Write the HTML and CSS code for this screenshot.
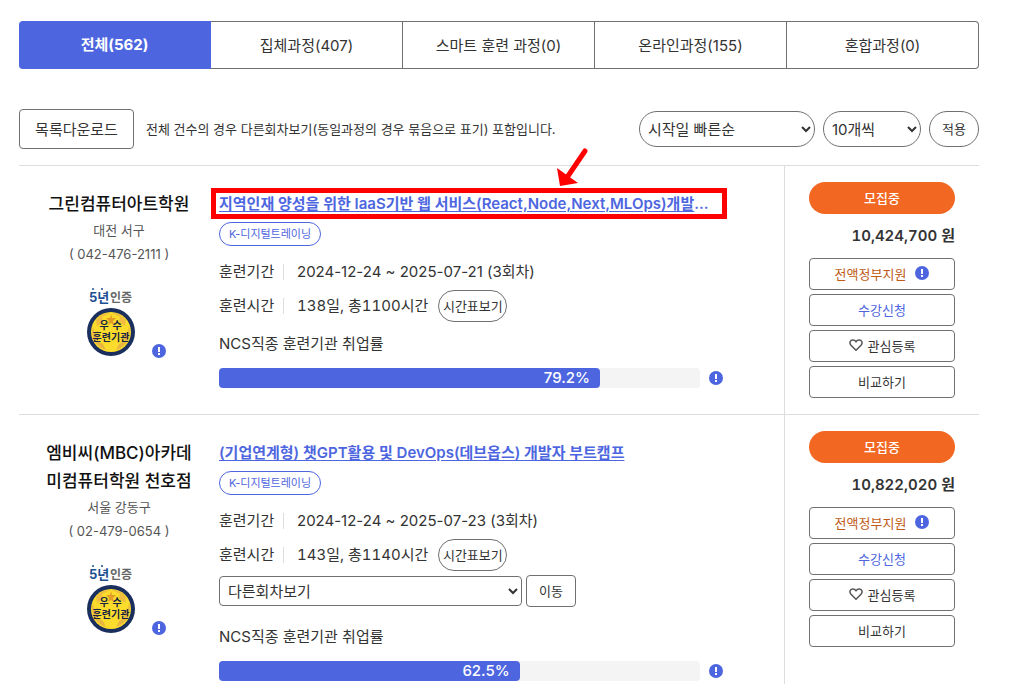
FILE: index.html
```html
<!DOCTYPE html>
<html lang="ko">
	<head>
		<meta charset="UTF-8" />
		<meta name="viewport" content="width=device-width, initial-scale=1.0" />
		<title>훈련과정 검색</title>
		<link rel="stylesheet" href="styles.css">
	</head>
	<body>
		<!-- shared icons -->
		<svg class="sprite" aria-hidden="true">
			<symbol id="icon-info" viewBox="0 0 14 14">
				<circle cx="7" cy="7" r="7" fill="#4d66e0" />
				<path d="M6 3h2v5H6zM6 9h2v2H6z" fill="#fff" />
			</symbol>
			<symbol id="icon-heart" viewBox="0 0 14 12">
				<path d="M7 11.200 2 6.200C-.2 3.800 1.300 1 3.800 1 5.300 1 6.500 1.800 7 2.800 7.500 1.800 8.700 1 10.200 1c2.500 0 4 2.800 1.800 5.200z" fill="none" stroke="#555" stroke-width="1.500" stroke-linejoin="round" />
			</symbol>
			<symbol id="seal" viewBox="0 0 48 68">
				<circle cx="6" cy="1" r="1" fill="#1c4f93" />
				<circle cx="15" cy="1" r="1" fill="#1c4f93" />
				<text x="2" y="14" font-size="13" font-weight="700" fill="#1c4f93">5년</text>
				<text x="23" y="14" font-size="12" font-weight="700" fill="#666">인증</text>
				<circle cx="24" cy="44" r="24" fill="#1b2f5e" />
				<circle cx="24" cy="44" r="20" fill="#fbdc2c" />
				<path d="M6 38a19 19 0 0 0 13 24l-3-6-5-3 1-6-5-3zM42 38a19 19 0 0 1-13 24l3-6 5-3-1-6 5-3z" fill="#e9b640" />
				<path d="M9 32q6-8 14-7l-8 4 1 5-6 4zM39 32q-6-8-14-7l8 4-1 5 6 4z" fill="#efbd3f" />
				<path d="m24 26 1 4h4l-3 3 1 4-3-2-3 2 1-4-3-3h4z" fill="#e59b28" />
				<text x="17" y="41" font-size="10" font-weight="700" text-anchor="middle" fill="#16243f">우</text>
				<text x="30" y="41" font-size="10" font-weight="700" text-anchor="middle" fill="#16243f">수</text>
				<text x="24" y="53" font-size="10" font-weight="700" text-anchor="middle" fill="#16243f">훈련기관</text>
			</symbol>
		</svg>

		<main>
			<nav class="tabs">
				<a href="#" class="active">전체(562)</a>
				<a href="#">집체과정(407)</a>
				<a href="#">스마트 훈련 과정(0)</a>
				<a href="#">온라인과정(155)</a>
				<a href="#">혼합과정(0)</a>
			</nav>

			<form class="toolbar">
				<button type="button" class="btn btn-download">목록다운로드</button>
				<p>전체 건수의 경우 다른회차보기(동일과정의 경우 묶음으로 표기) 포함입니다.</p>
				<select class="sort" aria-label="정렬">
					<option>시작일 빠른순</option>
				</select>
				<select class="count" aria-label="목록 개수">
					<option>10개씩</option>
				</select>
				<button type="button" class="btn btn-apply">적용</button>
			</form>

			<article class="course">
				<div class="school">
					<h3>그린컴퓨터아트학원</h3>
					<p>대전 서구</p>
					<p>( 042-476-2111 )</p>
					<div class="cert">
						<svg class="seal"><use href="#seal" /></svg>
						<svg class="info"><use href="#icon-info" /></svg>
					</div>
				</div>
				<div class="detail">
					<div class="title marked">
						<a href="#">지역인재 양성을 위한 IaaS기반 웹 서비스(React,Node,Next,MLOps)개발</a><span>...</span>
						<svg class="arrow" viewBox="0 0 34 40">
							<path d="M29 3 12 28" stroke="#f00" stroke-width="5" stroke-linecap="round" />
							<path d="M1 20 4 38l18-3z" fill="#f00" />
						</svg>
					</div>
					<span class="badge">K-디지털트레이닝</span>
					<dl>
						<dt>훈련기간</dt>
						<dd>2024-12-24 ~ 2025-07-21 (3회차)</dd>
						<dt>훈련시간</dt>
						<dd class="hours">138일, 총1100시간 <button type="button" class="btn btn-time">시간표보기</button></dd>
					</dl>
					<p class="rate-label">NCS직종 훈련기관 취업률</p>
					<div class="rate">
						<div class="bar"><div class="fill" style="width: 79.2%">79.2%</div></div>
						<svg class="info"><use href="#icon-info" /></svg>
					</div>
				</div>
				<div class="actions">
					<span class="status">모집중</span>
					<strong class="price">10,424,700 원</strong>
					<button type="button" class="btn support">전액정부지원 <svg class="info"><use href="#icon-info" /></svg></button>
					<button type="button" class="btn apply">수강신청</button>
					<button type="button" class="btn"><svg class="heart"><use href="#icon-heart" /></svg>관심등록</button>
					<button type="button" class="btn">비교하기</button>
				</div>
			</article>

			<article class="course">
				<div class="school">
					<h3>엠비씨(MBC)아카데미컴퓨터학원 천호점</h3>
					<p>서울 강동구</p>
					<p>( 02-479-0654 )</p>
					<div class="cert">
						<svg class="seal"><use href="#seal" /></svg>
						<svg class="info"><use href="#icon-info" /></svg>
					</div>
				</div>
				<div class="detail">
					<div class="title">
						<a href="#">(기업연계형) 챗GPT활용 및 DevOps(데브옵스) 개발자 부트캠프</a>
					</div>
					<span class="badge">K-디지털트레이닝</span>
					<dl>
						<dt>훈련기간</dt>
						<dd>2024-12-24 ~ 2025-07-23 (3회차)</dd>
						<dt>훈련시간</dt>
						<dd class="hours">143일, 총1140시간 <button type="button" class="btn btn-time">시간표보기</button></dd>
					</dl>
					<div class="rounds">
						<select aria-label="다른회차보기">
							<option>다른회차보기</option>
						</select>
						<button type="button" class="btn">이동</button>
					</div>
					<p class="rate-label">NCS직종 훈련기관 취업률</p>
					<div class="rate">
						<div class="bar"><div class="fill" style="width: 62.5%">62.5%</div></div>
						<svg class="info"><use href="#icon-info" /></svg>
					</div>
				</div>
				<div class="actions">
					<span class="status">모집중</span>
					<strong class="price">10,822,020 원</strong>
					<button type="button" class="btn support">전액정부지원 <svg class="info"><use href="#icon-info" /></svg></button>
					<button type="button" class="btn apply">수강신청</button>
					<button type="button" class="btn"><svg class="heart"><use href="#icon-heart" /></svg>관심등록</button>
					<button type="button" class="btn">비교하기</button>
				</div>
			</article>
		</main>
	</body>
</html>
```
FILE: styles.css
```css
* {
	box-sizing: border-box;
}

body {
	margin: 0;
	background-color: #fff;
	color: #333;
	font-family: Inter, 'Noto Sans CJK KR', sans-serif;
	font-size: 15px;
	line-height: 24px;
}

main {
	padding: 21px 36px 0 19px;
}

h3,
p,
dl,
dd {
	margin: 0;
}

button,
select {
	font-family: inherit;
	color: #333;
	background-color: #fff;
	border: 1px solid #707070;
	border-radius: 4px;
}

select {
	font-size: 15px;
	padding: 0 0 0 4px;
}

.sprite {
	display: none;
}

.info {
	width: 14px;
	height: 14px;
	flex-shrink: 0;
}

.btn {
	display: flex;
	justify-content: center;
	align-items: center;
	height: 32px;
	padding: 0 0 2px;
	font-size: 13px;
	cursor: pointer;
}

/* tabs */
.tabs {
	display: grid;
	grid-template-columns: repeat(5, 1fr);
	height: 48px;
}

.tabs a {
	display: flex;
	justify-content: center;
	align-items: center;
	padding-top: 2px;
	border: 1px solid #707070;
	border-left: none;
	color: #333;
	text-decoration: none;
}

.tabs a:last-child {
	border-radius: 0 4px 4px 0;
}

.tabs .active {
	padding-top: 0;
	background-color: #4d66e0;
	border-color: #4d66e0;
	color: #fff;
	font-weight: 700;
	border-radius: 4px 0 0 4px;
}

/* toolbar */
.toolbar {
	display: flex;
	align-items: center;
	gap: 8px;
	margin: 40px 0 16px;
}

.toolbar p {
	flex: 1;
	margin-left: 4px;
	font-size: 13px;
	white-space: nowrap;
}

.btn-download {
	width: 115px;
	height: 40px;
	font-size: 15px;
}

.toolbar select,
.btn-apply {
	height: 36px;
	border-radius: 18px;
}

.sort {
	width: 176px;
}

.count {
	width: 98px;
}

.btn-apply {
	width: 50px;
}

/* course list */
.course {
	display: grid;
	grid-template-columns: 200px 1fr 195px;
	border-top: 1px solid #ddd;
}

.school {
	padding: 24px 24px 16px;
	text-align: center;
	font-size: 13px;
	color: #555;
}

.school h3 {
	font-size: 17px;
	font-weight: 500;
	line-height: 28px;
	color: #111;
	word-break: break-all;
}

.cert {
	display: flex;
	align-items: flex-end;
	gap: 17px;
	margin: 22px 0 0 44px;
}

.seal {
	width: 48px;
	height: 68px;
	margin-bottom: 2px;
	overflow: visible;
}

.detail {
	padding: 24px 60px 16px 0;
}

.title {
	position: relative;
	height: 28px;
	margin-bottom: 4px;
	font-size: 15px;
	font-weight: 600;
	line-height: 28px;
	white-space: nowrap;
	color: #4d66e0;
}

.title a {
	color: #4d66e0;
	text-underline-offset: 2px;
}

.marked::before {
	content: '';
	position: absolute;
	inset: -2px -3px -1px -8px;
	border: 5px solid #f00;
	pointer-events: none;
}

.arrow {
	position: absolute;
	right: 134px;
	bottom: 30px;
	width: 34px;
	height: 40px;
}

.badge {
	display: inline-block;
	height: 24px;
	padding: 0 9px;
	border: 1px solid #4d66e0;
	border-radius: 12px;
	color: #4d66e0;
	font-size: 11px;
	line-height: 22px;
	vertical-align: top;
}

.detail dl {
	display: grid;
	grid-template-columns: 65px 1fr;
	column-gap: 13px;
	row-gap: 2px;
	align-items: center;
	margin-top: 10px;
}

.detail dt {
	height: 16px;
	line-height: 16px;
	border-right: 1px solid #ddd;
}

.detail dd {
	display: flex;
	align-items: center;
	gap: 10px;
	height: 32px;
}

.hours,
.price {
	font-variant-numeric: tabular-nums;
}

.btn-time {
	width: 69px;
	border-radius: 16px;
}

.rounds {
	display: flex;
	align-items: center;
	gap: 4px;
	margin: 4px 0 18px;
}

.rounds select {
	width: 303px;
	height: 30px;
}

.rounds .btn {
	width: 50px;
}

.rate-label {
	margin: 10px 0 12px;
}

.rate {
	display: flex;
	align-items: center;
	gap: 9px;
	margin-right: 1px;
}

.bar {
	flex: 1;
	height: 20px;
	border-radius: 4px;
	background-color: #f4f4f4;
}

.fill {
	height: 20px;
	padding-right: 10px;
	border-radius: 4px;
	background-color: #4d66e0;
	color: #fff;
	font-weight: 500;
	line-height: 20px;
	text-align: right;
}

.actions {
	display: flex;
	flex-direction: column;
	gap: 4px;
	padding: 16px 24px;
	border-left: 1px solid #ddd;
}

.status {
	height: 32px;
	border-radius: 16px;
	background-color: #f26722;
	color: #fff;
	font-size: 13px;
	font-weight: 500;
	line-height: 32px;
	text-align: center;
}

.price {
	height: 36px;
	font-weight: 600;
	line-height: 36px;
	text-align: right;
}

.support {
	gap: 9px;
	color: #c05a14;
}

.apply {
	color: #4d66e0;
}

.heart {
	width: 14px;
	height: 12px;
	margin-right: 5px;
}
```
